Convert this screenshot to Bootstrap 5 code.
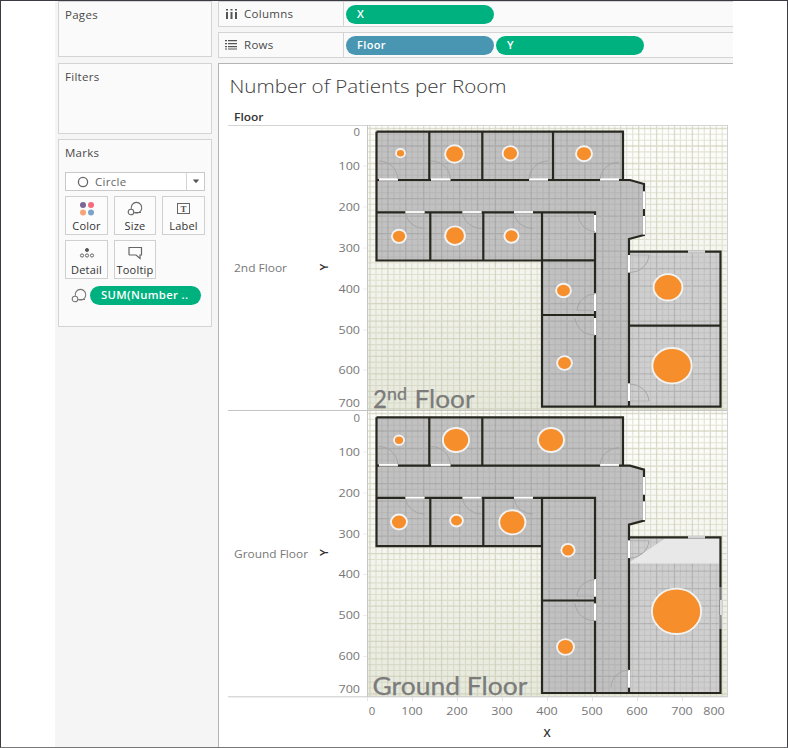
<!DOCTYPE html>
<html lang="en">
<head>
<meta charset="utf-8">
<title>Number of Patients per Room</title>
<meta name="viewport" content="width=device-width, initial-scale=1">
<link rel="stylesheet" href="https://cdn.jsdelivr.net/npm/bootstrap@5.3.0/dist/css/bootstrap.min.css">
<style>
body{font-family:"Open Sans","Noto Sans",sans-serif;font-size:11.5px;line-height:16px;color:#4a4a4a;background:#fff}
.frame{width:788px;height:748px;border:1px solid #3b3b46;border-bottom-color:#777;padding-left:54px;overflow:hidden}
.side{width:163px;background:#f5f5f5;padding:0 6px 0 3px}
.main{width:515px}
.pane{background:#fafafa;border:1px solid #d4d4d4;padding:5px 6px}
.pane-title{letter-spacing:.28px}
.pages{height:56px}.filters{height:71px;margin-top:6px}.marks{height:188px;margin-top:5px}
.shelves{background:#f5f5f5;height:62px}
.shelf{height:26px;border:1px solid #d4d4d4;border-right:0;background:#fafafa}
.shelf+.shelf{margin-top:5px}
.shelf-name{width:125px;border-right:1px solid #d4d4d4;padding-left:6px;letter-spacing:.3px}
.shelf-name span{padding-left:6px;margin-top:-1px}
.pill{height:19px;width:148px;border-radius:10px;background:#00b180;color:#fff;font-weight:600;font-size:11px;padding-left:11px;line-height:18px;letter-spacing:.35px}
.shelf .pill{margin-left:2px}
.pill.dim{background:#4996b2}
.sheet{border-left:1px solid #b5b5b5;border-top:1px solid #b5b5b5;background:#fff}
.sheet svg{display:block}
.mark-type{height:19px;border:1px solid #c9c9c9;background:#fff;margin-top:11px;width:140px;padding-left:11px;color:#666;letter-spacing:.3px}
.mark-type .kind{padding-left:6px}
.mark-caret{width:18px;border-left:1px solid #d4d4d4}
.tiles{display:grid;grid-template-columns:43px 42px 43px;gap:5px 6px;margin-top:5px}
.tile{height:39px;border:1px solid #d0d0d0;background:#fcfcfc;color:#333;font-size:11px;line-height:14px;padding-top:4px;letter-spacing:.2px}
.tile span{margin-top:2px;white-space:nowrap}
.sumrow{margin-top:7px;padding-left:6px;gap:3px}
.sumrow .pill{width:111px;height:19px;font-size:11.300px}
</style>
<script src="https://cdn.jsdelivr.net/npm/bootstrap@5.3.0/dist/js/bootstrap.bundle.min.js"></script>
</head>
<body>
<div class="frame d-flex">
  <aside class="side">
    <section class="pane pages"><div class="pane-title">Pages</div></section>
    <section class="pane filters"><div class="pane-title">Filters</div></section>
    <section class="pane marks">
      <div class="pane-title">Marks</div>
      <div class="mark-type d-flex align-items-center">
        <svg width="12" height="12"><circle cx="6" cy="6" r="4.6" fill="none" stroke="#666" stroke-width="1.3"/></svg>
        <span class="kind flex-grow-1">Circle</span>
        <span class="mark-caret d-flex align-items-center justify-content-center h-100"><svg width="8" height="5"><path d="M.8.5h6.4L4 4.3z" fill="#555"/></svg></span>
      </div>
      <div class="tiles">
        <div class="tile d-flex flex-column align-items-center"><svg width="16" height="16"><circle cx="4" cy="4" r="3" fill="#7b6795"/><circle cx="12" cy="4" r="3" fill="#f76a7b"/><circle cx="4" cy="11.5" r="3" fill="#f5a578"/><circle cx="12" cy="11.5" r="3" fill="#7ea3c9"/></svg><span>Color</span></div>
        <div class="tile d-flex flex-column align-items-center"><svg width="16" height="16" fill="none" stroke="#666" stroke-width="1.1"><path d="M4.300 7.800A5.300 5.300 0 1 1 7.300 11.500H14"/><circle cx="4" cy="11" r="2.8"/></svg><span>Size</span></div>
        <div class="tile d-flex flex-column align-items-center"><svg width="16" height="16"><rect x="1.500" y="2.500" width="12" height="10" fill="none" stroke="#666"/><text x="7.500" y="10.500" font-family="Liberation Serif,serif" font-size="9" font-weight="bold" text-anchor="middle" fill="#555" letter-spacing="0">T</text></svg><span>Label</span></div>
        <div class="tile d-flex flex-column align-items-center"><svg width="16" height="16" fill="none" stroke="#666"><circle cx="8" cy="5" r="1.6" fill="#555"/><circle cx="3" cy="10.5" r="1.6"/><circle cx="8" cy="10.5" r="1.6"/><circle cx="13" cy="10.5" r="1.6"/></svg><span>Detail</span></div>
        <div class="tile d-flex flex-column align-items-center"><svg width="16" height="16" fill="none" stroke="#666" stroke-width="1.2"><path d="M2 2.500h12.500v7.500h-1.500v3.500L9 10H3Q2 10 2 9z"/></svg><span>Tooltip</span></div>
      </div>
      <div class="sumrow d-flex align-items-center">
        <svg width="16" height="16" fill="none" stroke="#777" stroke-width="1.1"><path d="M4.300 7.800A5.300 5.300 0 1 1 7.300 11.500H14"/><circle cx="4" cy="11" r="2.8"/></svg>
        <div class="pill">SUM(Number ..</div>
      </div>
    </section>
  </aside>
  <main class="main">
    <div class="shelves">
      <div class="shelf d-flex align-items-center">
        <div class="shelf-name d-flex align-items-center h-100"><svg width="13" height="12" fill="#555"><path d="M1 1h2v1.500H1zM5.500 1h2v1.500h-2zM10 1h2v1.500h-2zM1 4h2v7H1zM5.500 4h2v7h-2zM10 4h2v7h-2z"/></svg><span>Columns</span></div>
        <div class="pill">X</div>
      </div>
      <div class="shelf d-flex align-items-center">
        <div class="shelf-name d-flex align-items-center h-100"><svg width="13" height="12" fill="#555"><path d="M0 1h2v1.200H0zM3 1h9v1.200H3zM0 4h2v1.200H0zM3 4h9v1.200H3zM0 7h2v1.200H0zM3 7h9v1.200H3zM0 9.500h2v1H0zM3 9.500h9v1H3z"/></svg><span>Rows</span></div>
        <div class="pill dim">Floor</div>
        <div class="pill">Y</div>
      </div>
    </div>
    <div class="sheet"><svg id="chart" width="514" height="683" viewBox="219 64 514 683"></svg></div>
  </main>
</div>
<script>
(function(){
  var o=[];
  function add(s){o.push(s);}
  function line(x1,y1,x2,y2,c,w){add('<path d="M'+x1+' '+y1+'L'+x2+' '+y2+'" stroke="'+c+'" stroke-width="'+w+'" fill="none"/>');}
  function text(x,y,s,size,fill,extra){add('<text x="'+x+'" y="'+y+'" font-size="'+size+'" fill="'+fill+'" lengthAdjust="spacingAndGlyphs" '+(extra||'')+'>'+s+'</text>');}
  add('<defs><linearGradient id="paper" x1="0" y1="0" x2="0" y2="1"><stop offset="0" stop-color="#fefefc"/><stop offset=".45" stop-color="#f5f6f0"/><stop offset="1" stop-color="#e7e9dd"/></linearGradient></defs>');
  text(229.500,93,'Number of Patients per Room',18.500,'#3c3c3c','font-weight="300" textLength="277"');
  text(234,121,'Floor',11,'#333','font-weight="600" textLength="29.500"');
  text(234,272,'2nd Floor',11.500,'#777','textLength="53"');
  text(234,557.500,'Ground Floor',11.500,'#777','textLength="74"');
  [267,552.500].forEach(function(y){add('<text transform="translate(327.500 '+y+') rotate(-90)" font-size="11.500" font-weight="600" text-anchor="middle" fill="#333">Y</text>');});
  text(547,737,'X',11.500,'#333','font-weight="600" text-anchor="middle"');

  // Ruling of the grid paper; used behind each floor and again over its rooms
  function grid(y0,y1,c,op,strong){
    var d='',e='',i=0,x,y;
    for(x=370;x<727;x+=5.97){if(i++%3==0)e+='M'+x.toFixed(1)+' '+y0+'V'+y1;else d+='M'+x.toFixed(1)+' '+y0+'V'+y1;}
    i=0;
    for(y=y0+2.500;y<y1;y+=5.84){if(i++%3==0)e+='M368 '+y.toFixed(1)+'H727';else d+='M368 '+y.toFixed(1)+'H727';}
    add('<path d="'+d+'" stroke="'+c+'" stroke-width="1.1" opacity="'+op+'"/><path d="'+e+'" stroke="'+c+'" stroke-width="1.3" opacity="'+strong+'"/>');
  }
  function floor(dy,ground){
    var top=ground?411:126,bot=ground?697:410,W='#27271f',b=ground?693:406.700;
    function Y(v){return v+dy;}
    add('<rect x="368" y="'+top+'" width="359" height="'+(bot-top)+'" fill="url(#paper)"/>');
    grid(top,bot,'#c6c8ad',.45,.6);
    var hall='M376.500 '+Y(131.700)+'H623V'+Y(180)+'H629L644 '+Y(184)+'V'+Y(235)+'L629 '+Y(239)+'V'+b+'H542V'+Y(260.500)+'H376.500Z';
    var clip='rooms'+(ground?'G':'2');
    add('<path d="'+hall+'" fill="#c1c1c1"/>');
    add('<rect x="629" y="'+Y(251.700)+'" width="91.500" height="'+(b-Y(251.700))+'" fill="#cfcfcf"/>');
    add('<clipPath id="'+clip+'"><path d="'+hall+'M629 '+Y(251.700)+'H720.500V'+b+'H629Z"/></clipPath><g clip-path="url(#'+clip+')">');
    grid(top,bot,'#858585',.17,.34);
    add('</g>');
    if(ground)add('<path d="M630 562L665 538.500H719.500V563.500H630Z" fill="#e8e8e8"/>');
    // Walls
    var d='M376.500 '+Y(131.700)+'H623V'+Y(180)+'M376.500 '+Y(131.700)+'V'+Y(260.500)+'H542M376.500 '+Y(180)+'H630L644 '+Y(184)+'V'+Y(235)+'L629 '+Y(239)+'V'+b
      +'M429.300 '+Y(131.700)+'V'+Y(180)+'M482.300 '+Y(131.700)+'V'+Y(180)
      +'M376.500 '+Y(212.300)+'H595V'+b+'M430.300 '+Y(212.300)+'V'+Y(260.500)+'M483.300 '+Y(212.300)+'V'+Y(260.500)+'M542 '+Y(212.300)+'V'+b+'H720.500V'+Y(251.700)+'H629';
    d+=ground?'M542 600.500H595':'M553 131.700V180M542 260.300H595M542 315H595M629 325.700H720.500';
    add('<path d="'+d+'" fill="none" stroke="'+W+'" stroke-width="2.200" stroke-linejoin="miter"/>');
    // Door and window openings
    function h(x1,x2,y,c){line(x1,y,x2,y,'#bdbdbd',3);line(x1,y-.300,x2,y-.300,c||'#fff',1.700);}
    function v(x,y1,y2,c){line(x,y1,x,y2,'#bdbdbd',3);line(x,y1,x,y2,c||'#fff',2);}
    function arc(x1,y1,x2,y2,r,s){add('<path d="M'+x1+' '+y1+'A'+r+' '+r+' 0 0 '+s+' '+x2+' '+y2+'" fill="none" stroke="#a3a3a3" stroke-width=".9"/>');}
    h(379,398,Y(179.500));h(431,450.500,Y(179.500));h(600,619,Y(179.500));
    arc(379,Y(161),398,Y(179),19,1);arc(431,Y(161),450.500,Y(179),19,1);arc(600,Y(179),619,Y(162),19,1);
    if(!ground){h(529,548,179.500);arc(529,179,548,161,19,1);}
    [[405.500,424.500],[462.500,481.500],[514,533]].forEach(function(p){h(p[0],p[1],Y(212.300));arc(p[0],Y(213),p[1],Y(228.500),19,0);});
    v(644,Y(191.500),Y(209));v(644,Y(216),Y(234.500));
    if(!ground){v(595,215,232.500);arc(578,214,595,231.500,18,0);}
    v(595,Y(293.500),Y(311));v(595,Y(318),Y(335));
    arc(577,Y(310.500),595,Y(294),18,1);line(577,Y(310.500),594,Y(310.500),'#aaa',.700);
    arc(575,Y(318),595,Y(335),19,0);
    v(629,Y(255),Y(272.500));arc(649,Y(255),630,Y(272.500),19,1);line(630,Y(255),649,Y(255),'#aaa',.700);
    if(ground){v(629,670,687.500);arc(611,687,629,670,18,1);}
    else{v(629,383.500,401);arc(630,384,649,401,19,1);line(630,401,649,401,'#aaa',.700);}
    h(688,705,Y(251.700),'#d6d6d6');
    if(ground){v(720.500,587,600,'#777');v(721,600,615,'#ddd');v(720.500,615,629,'#888');}
  }
  floor(0,false);floor(285.600,true);
  line(228,125.500,727.500,125.500,'#d4d4d4',1);
  line(228,410.500,727.500,410.500,'#c4c4c4',1);
  line(228,696.800,727.500,696.800,'#c9c9c9',1);
  line(367.500,125,367.500,697,'#c6c6c6',1);line(727.500,125,727.500,697,'#d0d0d0',1);
  add('<g font-family="Lato,sans-serif" font-weight="400" stroke="#7b7b7b" stroke-width=".25">');
  text(373,407.500,'2',25,'#7b7b7b','textLength="14"');
  text(387,400,'nd',16.500,'#7b7b7b','textLength="20"');
  text(414.500,407.500,'Floor',25,'#7b7b7b','textLength="60"');
  text(372.500,694.500,'Ground Floor',25,'#7b7b7b','textLength="155"');
  add('</g>');
  // Axes
  [[0,132],[100,166],[200,207],[300,248],[400,289],[500,330],[600,370],[700,402.500],
   [0,418],[100,451.500],[200,492.500],[300,533.500],[400,574],[500,615],[600,656],[700,688.500]].forEach(function(t){
    text(360,t[1]+4,t[0],11.500,'#777','text-anchor="end" textLength="'+(t[0]?21.500:6.500)+'"');});
  [166,207,248,289,330,370,452,493,534,574.500,615.500,656.500].forEach(function(y){line(363,y,367,y,'#eee',1);});
  [[0,372],[100,412],[200,457],[300,502],[400,547],[500,592],[600,637],[700,682],[800,714]].forEach(function(t){
    text(t[1],715,t[0],11.500,'#777','text-anchor="middle" textLength="'+(t[0]?21.500:6.500)+'"');
    if(t[0]!=800)line(t[0]?t[1]+.500:367.500,697,t[0]?t[1]+.500:367.500,701,'#e4e4e4',1);});
  // Patient counts: centre x, centre y, horizontal and vertical radius
  [[400.500,153.200,3.800,3.500],[454.500,154,8.700,8],[510.300,153.300,7,6.500],[584,153.700,7.300,6.800],[399,236.300,6.400,5.900],[455,235.700,9.200,8.600],[511.500,236,6.400,6],[563.500,290.500,6.700,6],[564.500,363,6.700,6.200],[668,287.300,13.700,12.500],[672,365.700,19,17],
   [399,440.200,4.300,4],[456,440,12.400,11.300],[551,440,12.300,11.300],[399,522,7.300,6.800],[456.500,520.600,5.700,5.200],[512.300,522.300,12.400,11.400],[568,550.200,6,5.600],[565.500,647,7.800,7.200],[676.500,611.300,23.900,22]
  ].forEach(function(c){add('<ellipse cx="'+c[0]+'" cy="'+c[1]+'" rx="'+(c[2]+.700)+'" ry="'+(c[3]+.700)+'" fill="#f58e2b" stroke="#f3f3f3" stroke-width="1.900"/>');});
  document.getElementById('chart').innerHTML=o.join('');
})();
</script>
</body>
</html>
